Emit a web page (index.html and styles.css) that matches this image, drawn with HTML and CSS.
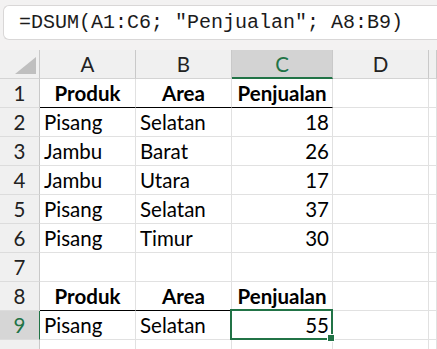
FILE: index.html
```html
<!DOCTYPE html>
<html lang="id">
<head>
<meta charset="utf-8">
<title>DSUM</title>
<link rel="stylesheet" href="styles.css">
</head>
<body>
<div class="formula">=DSUM(A1:C6; "Penjualan"; A8:B9)</div>
<div class="sheet">
  <div class="corner"><svg width="40" height="28" viewBox="0 0 40 28"><polygon points="36,7 36,24 15,24" fill="#bfbfbf"/></svg></div>
  <div class="colh">A</div><div class="colh">B</div><div class="colh sel">C</div><div class="colh">D</div><div class="colh"></div>

  <div class="rowh">1</div><div class="c b ctr line">Produk</div><div class="c b ctr line">Area</div><div class="c b ctr line">Penjualan</div><div class="c"></div><div class="c"></div>
  <div class="rowh">2</div><div class="c">Pisang</div><div class="c">Selatan</div><div class="c num">18</div><div class="c"></div><div class="c"></div>
  <div class="rowh">3</div><div class="c">Jambu</div><div class="c">Barat</div><div class="c num">26</div><div class="c"></div><div class="c"></div>
  <div class="rowh">4</div><div class="c">Jambu</div><div class="c">Utara</div><div class="c num">17</div><div class="c"></div><div class="c"></div>
  <div class="rowh">5</div><div class="c">Pisang</div><div class="c">Selatan</div><div class="c num">37</div><div class="c"></div><div class="c"></div>
  <div class="rowh">6</div><div class="c">Pisang</div><div class="c">Timur</div><div class="c num">30</div><div class="c"></div><div class="c"></div>
  <div class="rowh">7</div><div class="c"></div><div class="c"></div><div class="c"></div><div class="c"></div><div class="c"></div>
  <div class="rowh">8</div><div class="c b ctr line">Produk</div><div class="c b ctr line">Area</div><div class="c b ctr line">Penjualan</div><div class="c"></div><div class="c"></div>
  <div class="rowh sel">9</div><div class="c">Pisang</div><div class="c">Selatan</div><div class="c num active">55</div><div class="c"></div><div class="c"></div>
  <div class="rowh"></div><div class="c"></div><div class="c"></div><div class="c"></div><div class="c"></div><div class="c"></div>
</div>
</body>
</html>
```
FILE: styles.css
```css
html, body {
  margin: 0;
  padding: 0;
  overflow: hidden;
  background: #f3f2f2;
}

body {
  font-family: Lato, "Liberation Sans", sans-serif;
  color: #000;
}

.formula {
  box-sizing: border-box;
  margin: 5px 0 0 3px;
  height: 35px;
  background: #fff;
  border: 1px solid #d9d7d7;
  border-right: none;
  border-radius: 6px 0 0 6px;
  padding-left: 15px;
  font-family: "Liberation Mono", "DejaVu Sans Mono", monospace;
  font-size: 20px;
  line-height: 33px;
  color: #1b1b1b;
  white-space: nowrap;
  overflow: hidden;
}

.sheet {
  margin-top: 10px;
  display: grid;
  grid-template-columns: 40px 96px 96px 101px 96px 1fr;
  grid-template-rows: repeat(10, 29px) 10px;
  background: #fff;
  font-size: 20.5px;
  overflow: hidden;
}

.sheet > div {
  box-sizing: border-box;
  line-height: 28px;
  white-space: nowrap;
  overflow: visible;
}

.corner {
  background: #f0f0f0;
  border-right: 1px solid #c9c9c9;
  border-bottom: 1px solid #d4d4d4;
}

.corner svg {
  display: block;
}

.colh {
  background: #f0f0f0;
  border-right: 1px solid #c9c9c9;
  border-bottom: 1px solid #d4d4d4;
  text-align: center;
  color: #222;
}

.colh.sel {
  background: #d3d3d3;
  color: #217346;
  border-bottom: 2px solid #217346;
}

.rowh {
  background: #f0f0f0;
  border-right: 1px solid #c9c9c9;
  border-bottom: 1px solid #dcdcdc;
  text-align: center;
  color: #222;
}

.rowh.sel {
  background: #d6d6d6;
  color: #217346;
  border-right: 1px solid #217346;
}

.c {
  border-right: 1px solid #e1e1e1;
  border-bottom: 1px solid #e1e1e1;
  padding: 0 3px 0 4px;
}

.c.b {
  font-weight: 700;
}

.c.ctr {
  text-align: center;
  padding: 0;
}

.c.num {
  text-align: right;
}

.c.line {
  border-bottom-color: #000;
}

.c.active {
  position: relative;
}

.c.active::after {
  content: "";
  position: absolute;
  top: -2px;
  left: -2px;
  right: -1px;
  bottom: -1px;
  border: 2px solid #217346;
}

.c.active::before {
  content: "";
  position: absolute;
  right: -3px;
  bottom: -3px;
  width: 6px;
  height: 6px;
  background: #217346;
  border: 1px solid #fff;
  z-index: 1;
}
```
